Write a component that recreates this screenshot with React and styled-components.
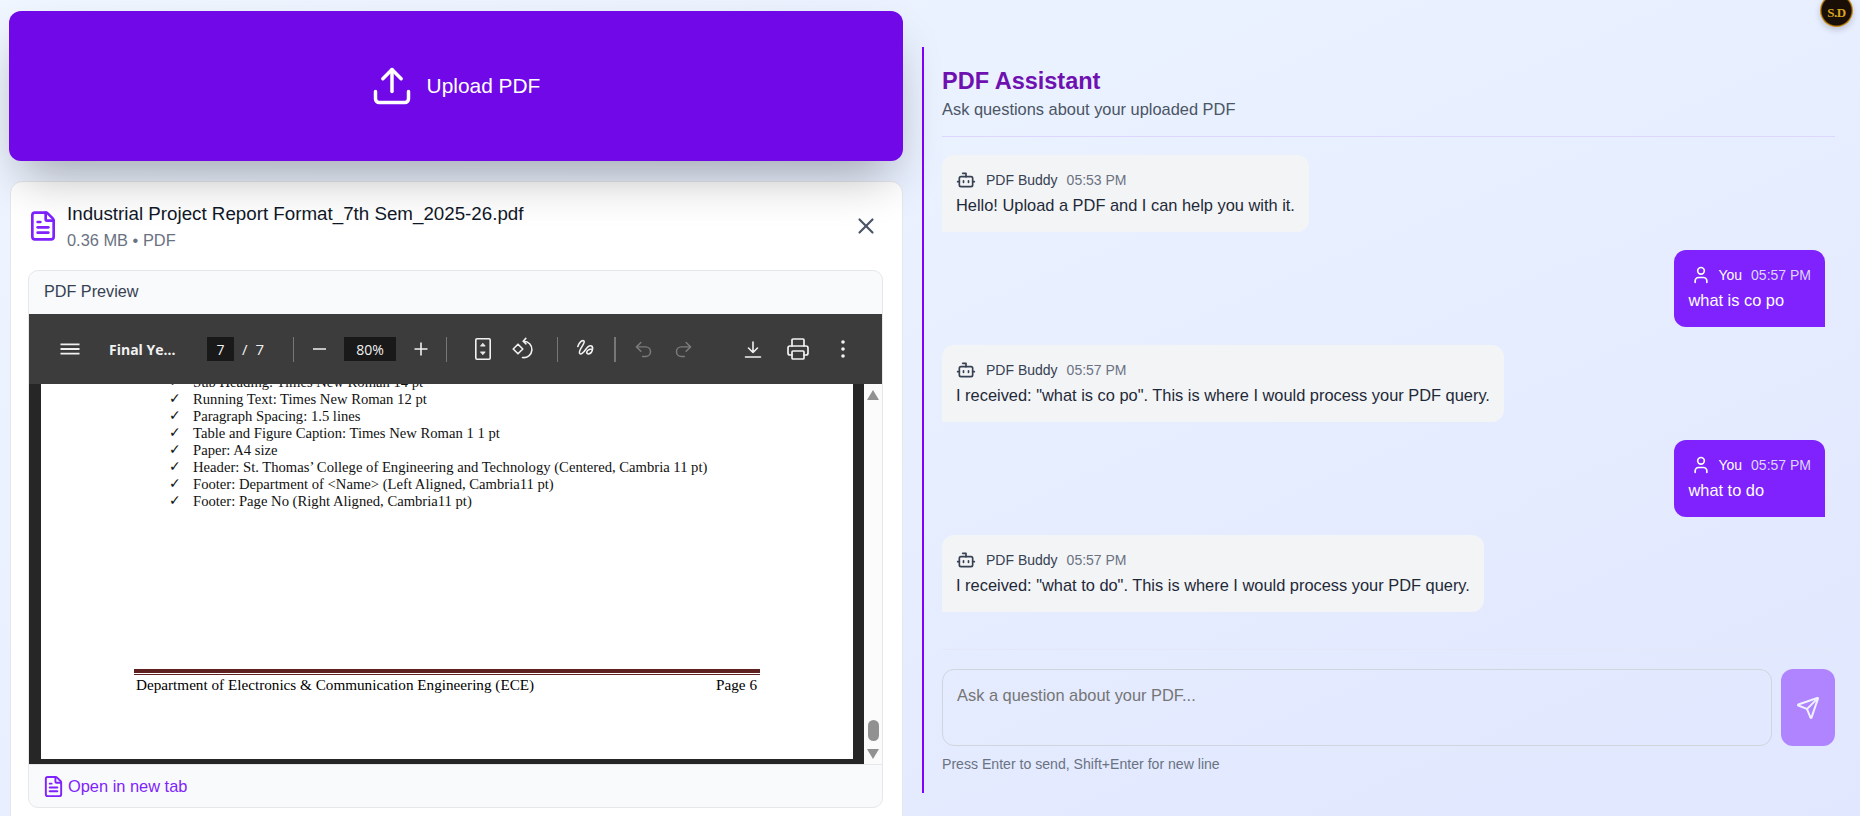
import React from "react";
import styled, { createGlobalStyle } from "styled-components";
import { Upload, FileText, X, Bot, User, Send, Printer, Undo2, Redo2 } from "lucide-react";

const Global = createGlobalStyle`
  html, body { margin: 0; padding: 0; height: 100%; overflow: hidden; }
  body { font-family: "Liberation Sans", Arial, sans-serif; color: #101828; }
  * { box-sizing: border-box; }
`;

const Page = styled.div`
  position: relative;
  display: flex;
  align-items: flex-start;
  height: 816px;
  overflow: hidden;
  background: linear-gradient(to bottom right, #eff6ff, #e0e7ff);
`;
const LeftColumn = styled.div`
  flex: 0 0 894px;
  margin-left: 9px;
  padding-top: 11px;
  display: flex;
  flex-direction: column;
  gap: 20px;
`;
const UploadButton = styled.button`
  position: relative;
  z-index: 1;
  height: 150px;
  border: 0;
  border-radius: 12px;
  background: #7008e7;
  color: #fff;
  display: flex;
  align-items: center;
  justify-content: center;
  gap: 13px;
  padding: 0 2px 0 0;
  font: 400 20.9px "Liberation Sans", Arial, sans-serif;
  box-shadow: 0 25px 50px -12px rgba(0, 0, 0, 0.32);
`;
const FileCard = styled.section`
  margin: 0 0 0 1px;
  background: #fff;
  border: 1px solid #e5e7eb;
  border-radius: 12px;
  padding: 0 17px 40px;
`;
const FileHead = styled.div`
  display: flex;
  align-items: center;
  height: 88px;
`;
const FileIcon = styled(FileText)`
  color: #7f22fe;
  margin-left: -1px;
  flex: none;
`;
const FileMeta = styled.div`
  margin-left: 8px;
  flex: 1;
  padding-top: 1px;
`;
const FileName = styled.div`
  font-size: 18.76px;
  line-height: 26px;
  color: #101828;
`;
const FileSub = styled.div`
  font-size: 16.4px;
  line-height: 26px;
  color: #6a7282;
`;
const CloseIcon = styled(X)`
  color: #4a5565;
  margin-right: 6px;
  margin-top: 0;
`;
const Preview = styled.div`
  border: 1px solid #e5e7eb;
  border-radius: 10px;
  background: #f9fafb;
  overflow: hidden;
  width: 855px;
`;
const PreviewLabel = styled.div`
  height: 43px;
  padding: 0 0 2px 15px;
  display: flex;
  align-items: center;
  font-size: 16.2px;
  color: #364153;
`;
const Toolbar = styled.div`
  height: 70px;
  background: #3c3c3c;
  color: #f1f1f1;
  display: flex;
  align-items: center;
  padding-left: 29px;
  font-family: "Open Sans", sans-serif;
  font-size: 14px;
`;
const ToolIcon = styled.span`
  flex: none;
  width: 24px;
  height: 24px;
  margin-left: ${(p) => p.$ml || 0}px;
  display: flex;
  align-items: center;
  justify-content: center;
  color: ${(p) => (p.$off ? "#7b7b7b" : "#f1f1f1")};
`;
const DocTitle = styled.span`
  flex: none;
  width: 70px;
  margin-left: 27px;
  font-weight: 700;
  font-size: 14px;
  white-space: nowrap;
`;
const ToolField = styled.span`
  flex: none;
  height: 24px;
  width: ${(p) => p.$w}px;
  margin-left: ${(p) => p.$ml}px;
  background: #191919;
  display: flex;
  align-items: center;
  justify-content: center;
`;
const PageCount = styled.span`
  flex: none;
  width: 59px;
  padding-left: 8px;
  display: flex;
  gap: 8px;
  font-size: 15px;
`;
const ToolSep = styled.span`
  flex: none;
  width: ${(p) => p.$w || 1}px;
  height: 25px;
  margin-left: ${(p) => p.$ml || 0}px;
  background: #777;
`;
const Viewer = styled.div`
  display: flex;
  height: 380px;
`;
const PdfArea = styled.div`
  flex: none;
  width: 835px;
  background: #262626;
  padding: 0 11px 5px 12px;
`;
const PdfPage = styled.div`
  height: 375px;
  background: #fff;
  overflow: hidden;
  font-family: "Liberation Serif", "Times New Roman", serif;
  color: #111;
`;
const CheckList = styled.ul`
  list-style: none;
  margin: -10px 0 0;
  padding: 0 0 0 128px;
  height: 295px;
`;
const CheckItem = styled.li`
  height: 17px;
  line-height: 17px;
  font-size: 14.65px;
  white-space: nowrap;
  display: flex;
`;
const Tick = styled.span`
  flex: none;
  width: 24px;
  font-family: "DejaVu Sans", sans-serif;
  font-size: 14px;
  line-height: 14px;
`;
const Rule = styled.div`
  width: 626px;
  margin-left: 93px;
  height: 6px;
  border-top: 4px solid #5f2020;
  border-bottom: 1px solid #5f2020;
`;
const PdfFooter = styled.div`
  width: 626px;
  margin: 1px 0 0 93px;
  padding: 0 3px 0 2px;
  display: flex;
  justify-content: space-between;
  font-size: 15.2px;
  line-height: 18px;
  color: #000;
`;
const ScrollTrack = styled.div`
  flex: 1;
  background: #fbfbfb;
  display: flex;
  flex-direction: column;
  align-items: center;
  padding: 6px 0 5px;
`;
const ArrowUp = styled.span`
  width: 0;
  height: 0;
  border-left: 6.5px solid transparent;
  border-right: 6.5px solid transparent;
  border-bottom: 10px solid #919191;
`;
const ArrowDown = styled.span`
  width: 0;
  height: 0;
  margin-top: 8px;
  border-left: 6.5px solid transparent;
  border-right: 6.5px solid transparent;
  border-top: 10px solid #919191;
`;
const Thumb = styled.span`
  width: 11px;
  height: 21px;
  margin-top: auto;
  border-radius: 6px;
  background: #919191;
`;
const PreviewFoot = styled.a`
  height: 43px;
  border-top: 1px solid #e5e7eb;
  padding-left: 13px;
  display: flex;
  align-items: center;
  gap: 3px;
  font-size: 16.4px;
  color: #7f22fe;
`;
const ChatColumn = styled.div`
  flex: 0 0 913px;
  margin: 47px 0 0 19px;
  height: 746px;
  border-left: 2px solid #7f00ff;
  padding: 0 0 0 18px;
  display: flex;
  flex-direction: column;
`;
const ChatHead = styled.header`
  height: 90px;
  padding-top: 20px;
  border-bottom: 1px solid #ddd6ff;
`;
const ChatTitle = styled.h1`
  margin: 0;
  font-size: 23.5px;
  line-height: 28px;
  font-weight: 700;
  color: #6e11b0;
`;
const ChatSub = styled.p`
  margin: 0;
  font-size: 16.4px;
  line-height: 28px;
  color: #4a5565;
`;
const Messages = styled.div`
  height: 513px;
  padding: 18px 10px 0 0;
  display: flex;
  flex-direction: column;
  gap: 18px;
  border-bottom: 1px solid #e3e7f8;
`;
const Bubble = styled.div`
  align-self: ${(p) => (p.$me ? "flex-end" : "flex-start")};
  height: 77px;
  padding: 14px 14px 0;
  border-radius: ${(p) => (p.$me ? "12px 12px 0 12px" : "12px 12px 12px 0")};
  background: ${(p) => (p.$me ? "#7f22fe" : "#f3f4f6")};
  color: ${(p) => (p.$me ? "#fff" : "#1e2939")};
`;
const MsgHead = styled.div`
  display: flex;
  align-items: center;
  height: 22px;
  font-size: 14px;
  color: ${(p) => (p.$me ? "#fff" : "#364153")};
`;
const MsgIcon = styled.span`
  display: flex;
  width: 30px;
  padding-left: ${(p) => (p.$me ? 3 : 0)}px;
`;
const MsgTime = styled.span`
  margin-left: 9px;
  color: ${(p) => (p.$me ? "#ddd6ff" : "#6a7282")};
`;
const MsgBody = styled.div`
  margin-top: 3px;
  font-size: 16.4px;
  line-height: 22px;
  white-space: nowrap;
`;
const Composer = styled.form`
  margin-top: 19px;
  display: flex;
  gap: 9px;
`;
const Question = styled.textarea`
  flex: 1;
  height: 77px;
  resize: none;
  border: 1px solid #d1d5dc;
  border-radius: 12px;
  background: transparent;
  padding: 16px 14px;
  font: 400 16.4px/18px "Liberation Sans", Arial, sans-serif;
  outline: none;
  &::placeholder { color: #757575; opacity: 1; }
`;
const SendButton = styled.button`
  flex: none;
  width: 54px;
  height: 77px;
  border: 0;
  border-radius: 12px;
  background: #7f22fe;
  opacity: 0.5;
  color: #fff;
  display: flex;
  align-items: center;
  justify-content: center;
`;
const Hint = styled.div`
  margin-top: 9px;
  font-size: 14.1px;
  line-height: 18px;
  color: #6a7282;
`;
const Avatar = styled.div`
  position: absolute;
  left: 1820px;
  top: -6px;
  width: 33px;
  height: 33px;
  border-radius: 50%;
  background: radial-gradient(circle, #1a0f06 0 62%, #c98a0c 68%, #8a5606 78%, #d29a18 86%, #1c1206 94%);
  box-shadow: 0 3px 6px rgba(0, 0, 0, 0.18);
  display: flex;
  align-items: center;
  justify-content: center;
  font: 700 13px "Liberation Serif", serif;
  color: #d9a520;
  padding-top: 4px;
  letter-spacing: -0.5px;
`;

const Stroke = ({ children }) => (
  <svg width="24" height="24" viewBox="0 0 24 24" fill="none" stroke="currentColor" strokeWidth="1.6" strokeLinecap="round" strokeLinejoin="round">
    {children}
  </svg>
);

const lines = [
  "Sub Heading: Times New Roman 14 pt",
  "Running Text: Times New Roman 12 pt",
  "Paragraph Spacing: 1.5 lines",
  "Table and Figure Caption: Times New Roman 1 1 pt",
  "Paper: A4 size",
  "Header: St. Thomas’ College of Engineering and Technology (Centered, Cambria 11 pt)",
  "Footer: Department of <Name> (Left Aligned, Cambria11 pt)",
  "Footer: Page No (Right Aligned, Cambria11 pt)",
];

const msgs = [
  { me: false, t: "05:53 PM", b: "Hello! Upload a PDF and I can help you with it." },
  { me: true, t: "05:57 PM", b: "what is co po" },
  { me: false, t: "05:57 PM", b: 'I received: "what is co po". This is where I would process your PDF query.' },
  { me: true, t: "05:57 PM", b: "what to do" },
  { me: false, t: "05:57 PM", b: 'I received: "what to do". This is where I would process your PDF query.' },
];

export default function App() {
  return (
    <Page>
      <Global />
      <LeftColumn>
        <UploadButton type="button">
          <Upload size={44} strokeWidth={1.9} />
          Upload PDF
        </UploadButton>
        <FileCard>
          <FileHead>
            <FileIcon size={32} strokeWidth={2} />
            <FileMeta>
              <FileName>Industrial Project Report Format_7th Sem_2025-26.pdf</FileName>
              <FileSub>0.36 MB • PDF</FileSub>
            </FileMeta>
            <CloseIcon size={26} strokeWidth={2} />
          </FileHead>
          <Preview>
            <PreviewLabel>PDF Preview</PreviewLabel>
            <Toolbar>
              <ToolIcon>
                <svg width="24" height="24" viewBox="0 0 24 24" fill="currentColor"><path d="M2.500 6.500h19v1.800h-19zM2.500 11.100h19v1.800h-19zM2.500 15.700h19v1.800h-19z" /></svg>
              </ToolIcon>
              <DocTitle>Final Ye...</DocTitle>
              <ToolField $w={27} $ml={28}>7</ToolField>
              <PageCount><span>/</span><span>7</span></PageCount>
              <ToolSep />
              <ToolIcon $ml={14}>
                <svg width="24" height="24" viewBox="0 0 24 24" fill="currentColor"><path d="M5 11.200h13v1.600H5z" /></svg>
              </ToolIcon>
              <ToolField $w={52} $ml={12}>80%</ToolField>
              <ToolIcon $ml={13}>
                <svg width="24" height="24" viewBox="0 0 24 24" fill="currentColor"><path d="M5.500 11.200h5.700V5.500h1.600v5.700h5.700v1.600h-5.700v5.700h-1.600v-5.700H5.500z" /></svg>
              </ToolIcon>
              <ToolSep $ml={13} />
              <ToolIcon $ml={24}>
                <Stroke>
                  <rect x="4.800" y="1.800" width="14.400" height="20.400" rx="1.200" />
                  <path d="M12 6.500l2.200 2.600H9.800zM12 17.500l2.200-2.600H9.800z" fill="currentColor" strokeWidth="0.8" />
                </Stroke>
              </ToolIcon>
              <ToolIcon $ml={16}>
                <Stroke>
                  <path d="M7 7.200l4.800 4.800L7 16.800 2.200 12z" />
                  <path d="M12.500 4.200a8.200 8.200 0 1 1-1 16.300" />
                  <path d="M14.800 1.400l-2.600 2.800 2.800 2.600" />
                </Stroke>
              </ToolIcon>
              <ToolSep $ml={22} />
              <ToolIcon $ml={16}>
                <Stroke>
                  <path d="M3.800 9.500C5 5.500 8.500 2.500 10 4c1.800 2-5.500 8.500-4.500 12 .8 2.500 4.200-.5 6-3.200 1.600-2.400 3.800-5 6-3.800 2.300 1.300.6 8-3 8-2.800 0-2.700-4.500 3.500-5" />
                </Stroke>
              </ToolIcon>
              <ToolSep $ml={16} $w={2} />
              <ToolIcon $ml={15} $off><Undo2 size={21} strokeWidth={1.7} /></ToolIcon>
              <ToolIcon $ml={16} $off><Redo2 size={21} strokeWidth={1.7} /></ToolIcon>
              <ToolIcon $ml={46}>
                <Stroke>
                  <path d="M12 5v10.500M7.500 11l4.500 4.500 4.500-4.500M4.500 20h15" />
                </Stroke>
              </ToolIcon>
              <ToolIcon $ml={21}><Printer size={24} strokeWidth={1.7} /></ToolIcon>
              <ToolIcon $ml={21}>
                <svg width="24" height="24" viewBox="0 0 24 24" fill="currentColor"><circle cx="12" cy="5" r="1.800" /><circle cx="12" cy="12" r="1.800" /><circle cx="12" cy="19" r="1.800" /></svg>
              </ToolIcon>
            </Toolbar>
            <Viewer>
              <PdfArea>
                <PdfPage>
                  <CheckList>
                    {lines.map((l) => (
                      <CheckItem key={l}><Tick>✓</Tick>{l}</CheckItem>
                    ))}
                  </CheckList>
                  <Rule />
                  <PdfFooter>
                    <span>Department of Electronics &amp; Communication Engineering (ECE)</span>
                    <span>Page 6</span>
                  </PdfFooter>
                </PdfPage>
              </PdfArea>
              <ScrollTrack>
                <ArrowUp />
                <Thumb />
                <ArrowDown />
              </ScrollTrack>
            </Viewer>
            <PreviewFoot>
              <FileText size={23} strokeWidth={2} />
              Open in new tab
            </PreviewFoot>
          </Preview>
        </FileCard>
      </LeftColumn>
      <ChatColumn>
        <ChatHead>
          <ChatTitle>PDF Assistant</ChatTitle>
          <ChatSub>Ask questions about your uploaded PDF</ChatSub>
        </ChatHead>
        <Messages>
          {msgs.map((m, i) => (
            <Bubble key={i} $me={m.me}>
              <MsgHead $me={m.me}>
                <MsgIcon $me={m.me}>{m.me ? <User size={20} /> : <Bot size={20} />}</MsgIcon>
                <span>{m.me ? "You" : "PDF Buddy"}</span>
                <MsgTime $me={m.me}>{m.t}</MsgTime>
              </MsgHead>
              <MsgBody>{m.b}</MsgBody>
            </Bubble>
          ))}
        </Messages>
        <Composer>
          <Question placeholder="Ask a question about your PDF..." />
          <SendButton type="button"><Send size={24} /></SendButton>
        </Composer>
        <Hint>Press Enter to send, Shift+Enter for new line</Hint>
      </ChatColumn>
      <Avatar>S.D</Avatar>
    </Page>
  );
}
